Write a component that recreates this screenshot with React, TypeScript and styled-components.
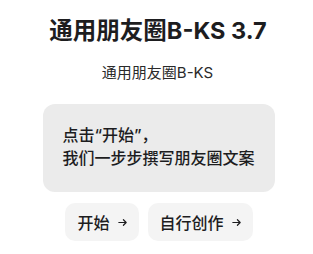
import styled, { createGlobalStyle } from 'styled-components';

const GlobalStyle = createGlobalStyle`
  body {
    margin: 0;
    background: #ffffff;
    font-family: Inter, "Noto Sans CJK SC", sans-serif;
    color: #1d1d1f;
  }
`;

function Arrow() {
  return (
    <svg width="11" height="11" viewBox="0 0 12 12" fill="none" stroke="currentColor" strokeWidth="1.3" strokeLinecap="round" strokeLinejoin="round">
      <path d="M2 6h8M7 3l3 3-3 3" />
    </svg>
  );
}

export default function App() {
  return (
    <Page>
      <GlobalStyle />
      <Title>通用朋友圈B-KS 3.7</Title>
      <Subtitle>通用朋友圈B-KS</Subtitle>
      <PromptCard>
        点击“开始”，
        <br />
        我们一步步撰写朋友圈文案
      </PromptCard>
      <ButtonRow>
        <ActionButton>
          开始 <Arrow />
        </ActionButton>
        <ActionButton>
          自行创作 <Arrow />
        </ActionButton>
      </ButtonRow>
    </Page>
  );
}

const Page = styled.div`
  display: flex;
  flex-direction: column;
  align-items: center;
  padding-top: 16px;
`;

const Title = styled.h1`
  margin: 0;
  font-size: 23.5px;
  font-weight: 700;
  line-height: 30px;
  margin-left: 3px;
`;

const Subtitle = styled.div`
  margin-top: 17px;
  font-size: 15px;
  line-height: 20px;
  color: #2a2a2a;
  margin-left: 2px;
`;

const PromptCard = styled.div`
  box-sizing: border-box;
  margin-top: 21px;
  width: 232px;
  height: 88px;
  padding: 20px 20px;
  background: #ebebeb;
  border-radius: 12px;
  font-size: 16px;
  font-weight: 500;
  line-height: 23px;
  margin-left: 4px;
`;

const ButtonRow = styled.div`
  display: flex;
  gap: 9px;
  margin-top: 11px;
  margin-left: 5px;
`;

const ActionButton = styled.button`
  display: flex;
  align-items: center;
  gap: 7px;
  height: 38px;
  padding: 0 11px 0 12px;
  border: none;
  border-radius: 10px;
  background: #f4f4f4;
  font-family: Inter, "Noto Sans CJK SC", sans-serif;
  font-size: 16px;
  font-weight: 500;
  color: #1d1d1f;
`;
